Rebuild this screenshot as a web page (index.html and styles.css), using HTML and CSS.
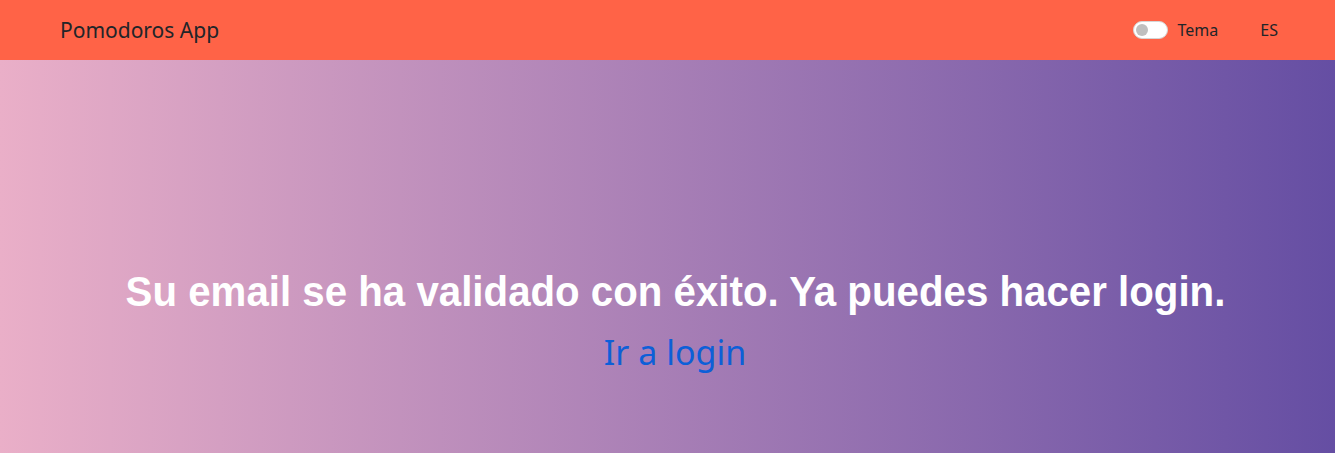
FILE: index.html
```html
<!DOCTYPE html>
<html lang="es">
<head>
<meta charset="utf-8">
<title>Pomodoros App</title>
<link rel="stylesheet" href="styles.css">
</head>
<body>
<nav class="navbar">
  <a class="brand" href="#">Pomodoros App</a>
  <div class="nav-right">
    <label class="theme-switch">
      <span class="switch"><span class="knob"></span></span>
      <span class="switch-label">Tema</span>
    </label>
    <span class="lang">ES</span>
  </div>
</nav>
<main class="hero">
  <h1 class="title"><span class="title-text">Su email se ha validado con éxito. Ya puedes hacer login.</span></h1>
  <a class="login-link" href="#">Ir a login</a>
</main>
</body>
</html>
```

FILE: styles.css
```css
* { box-sizing: border-box; }
html, body { margin: 0; height: 100%; }
body {
  font-family: "Noto Sans", "Open Sans", sans-serif;
  display: flex;
  flex-direction: column;
}
.navbar {
  height: 60px;
  flex: none;
  background: #ff6347;
  display: flex;
  align-items: center;
  justify-content: space-between;
  padding: 0 57px 0 60px;
}
.brand {
  color: #212529;
  text-decoration: none;
  font-size: 21px;
}
.nav-right {
  display: flex;
  align-items: center;
  gap: 42px;
}
.theme-switch {
  display: flex;
  align-items: center;
  gap: 10px;
  font-size: 16px;
  color: #212529;
}
.switch {
  width: 35px;
  height: 18px;
  border-radius: 9px;
  background: #fff;
  border: 1px solid #d5d5d5;
  display: flex;
  align-items: center;
  padding-left: 2px;
}
.knob {
  width: 12px;
  height: 12px;
  border-radius: 50%;
  background: #bfbfbf;
}
.lang { font-size: 16px; color: #212529; }
.hero {
  flex: 1;
  background: linear-gradient(to right, #eaafc8, #654ea3);
  display: flex;
  flex-direction: column;
  align-items: center;
  padding: 206px 0 0 15px;
}
.title {
  margin: 0;
  font-family: "Liberation Sans", Arial, sans-serif;
  font-weight: 700;
  font-size: 43px;
  line-height: 1.2;
  color: #fff;
  text-align: center;
  white-space: nowrap;
}
.title-text {
  display: inline-block;
  transform: scaleX(0.936);
}
.login-link {
  margin-top: 14px;
  color: #0d5fd8;
  text-decoration: none;
  font-size: 34px;
  line-height: 1.2;
}
```
